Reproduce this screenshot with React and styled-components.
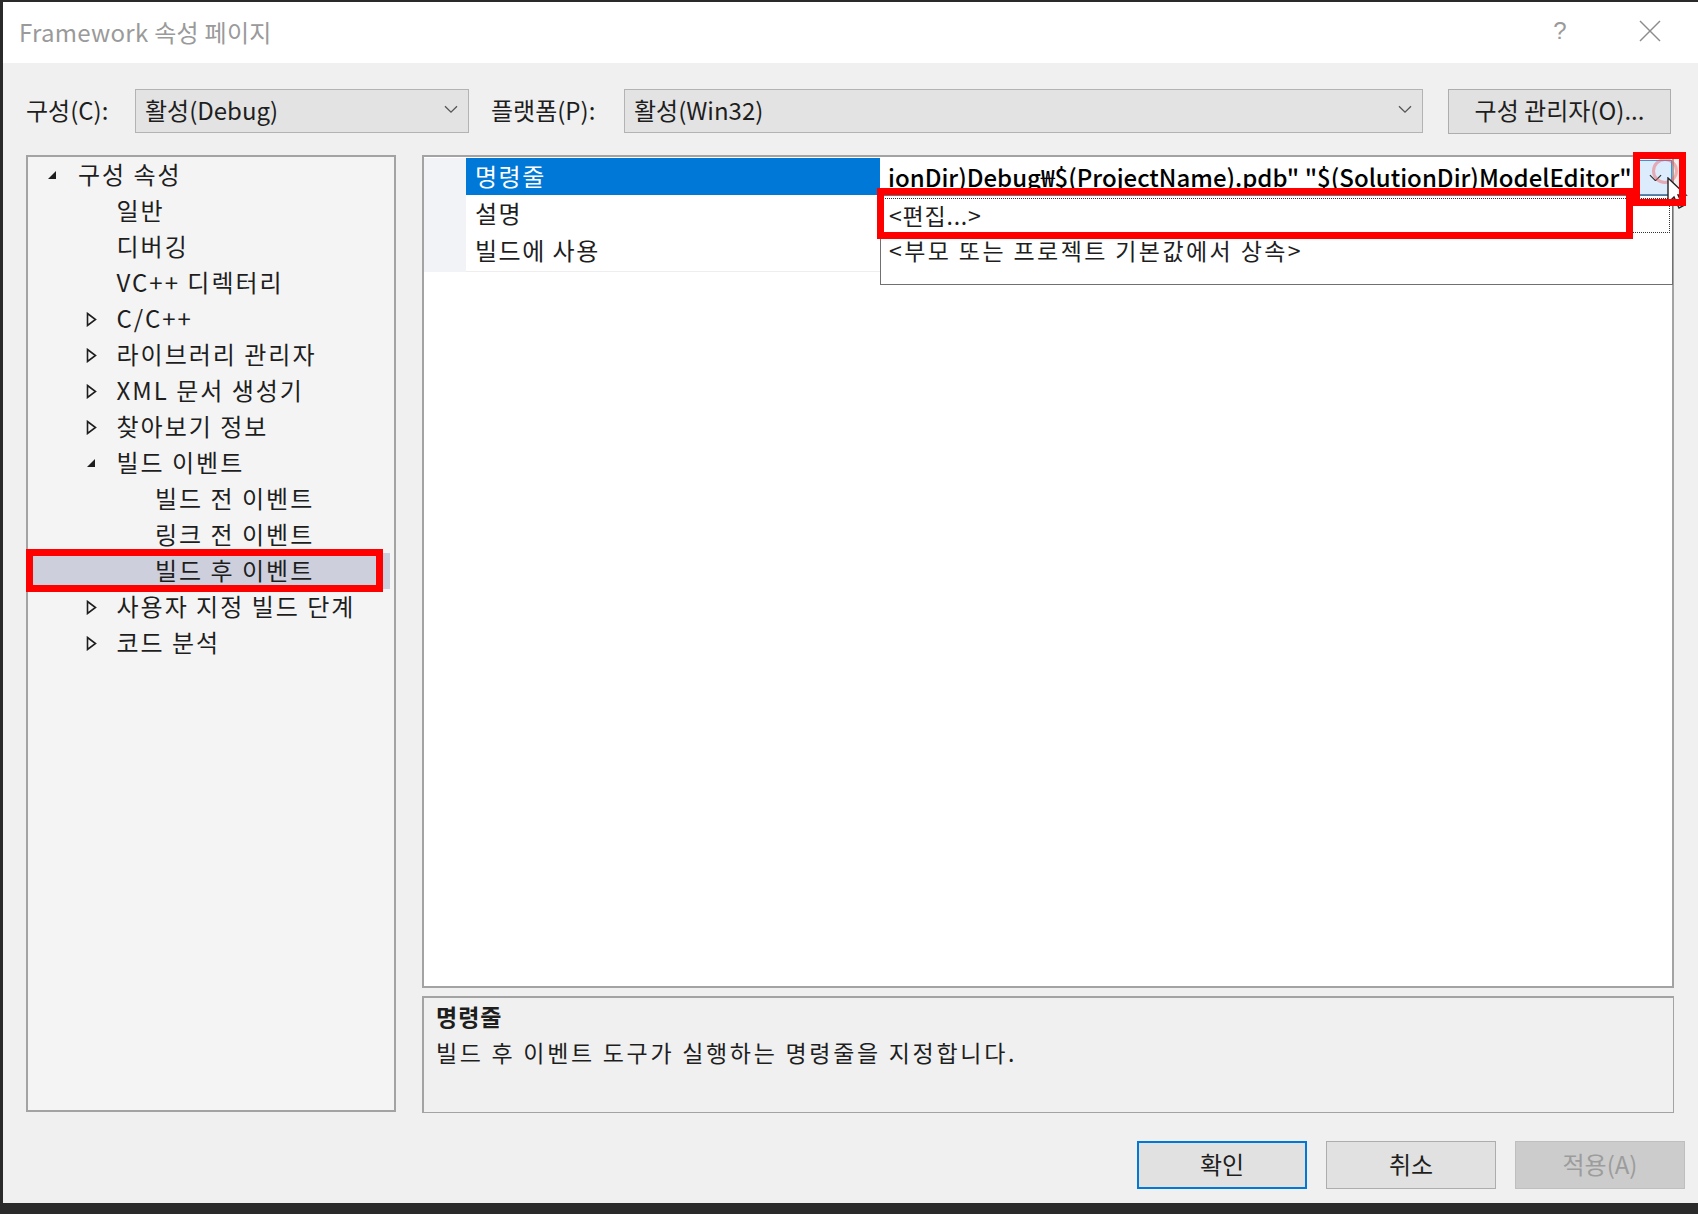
import styled, { createGlobalStyle } from "styled-components";

const GlobalStyle = createGlobalStyle`
  html, body {
    margin: 0;
    padding: 0;
    background: #2a2a2a;
  }
  body {
    font-family: "Noto Sans CJK KR", "Noto Sans", sans-serif;
  }
`;

const tree = [
  { label: "구성 속성", level: 0, twisty: "open" },
  { label: "일반", level: 1 },
  { label: "디버깅", level: 1 },
  { label: "VC++ 디렉터리", level: 1 },
  { label: "C/C++", level: 1, twisty: "closed" },
  { label: "라이브러리 관리자", level: 1, twisty: "closed" },
  { label: "XML 문서 생성기", level: 1, twisty: "closed" },
  { label: "찾아보기 정보", level: 1, twisty: "closed" },
  { label: "빌드 이벤트", level: 1, twisty: "open" },
  { label: "빌드 전 이벤트", level: 2 },
  { label: "링크 전 이벤트", level: 2 },
  { label: "빌드 후 이벤트", level: 2, selected: true },
  { label: "사용자 지정 빌드 단계", level: 1, twisty: "closed" },
  { label: "코드 분석", level: 1, twisty: "closed" },
];

function Chevron({ size = 14, color = "#555" }) {
  return (
    <svg width={size} height={size * 0.6} viewBox="0 0 14 8">
      <polyline points="1,1 7,7 13,1" fill="none" stroke={color} strokeWidth="1.3" />
    </svg>
  );
}

function Twisty({ kind }) {
  if (kind === "open") {
    return (
      <svg width="10" height="10" viewBox="0 0 10 10">
        <polygon points="9,1 9,9 1,9" fill="#1e1e1e" />
      </svg>
    );
  }
  if (kind === "closed") {
    return (
      <svg width="11" height="15" viewBox="0 0 11 15">
        <polygon points="1.5,1.5 9.5,7.5 1.5,13.5" fill="none" stroke="#1e1e1e" strokeWidth="1.6" />
      </svg>
    );
  }
  return null;
}

export default function App() {
  return (
    <>
      <GlobalStyle />
      <Screen>
        <Dialog>
          <TitleBar>
            <Title>Framework 속성 페이지</Title>
            <TitleButtons>
              <HelpMark>?</HelpMark>
              <svg width="22" height="22" viewBox="0 0 22 22">
                <line x1="1" y1="1" x2="21" y2="21" stroke="#8c8c8c" strokeWidth="1.4" />
                <line x1="21" y1="1" x2="1" y2="21" stroke="#8c8c8c" strokeWidth="1.4" />
              </svg>
            </TitleButtons>
          </TitleBar>

          <Toolbar>
            <Label $w={109}>구성(C):</Label>
            <Combo $w={334}>
              <span>활성(Debug)</span>
              <Chevron />
            </Combo>
            <Label $w={133} $ml={22}>플랫폼(P):</Label>
            <Combo $w={799}>
              <span>활성(Win32)</span>
              <Chevron />
            </Combo>
            <ToolButton>구성 관리자(O)...</ToolButton>
          </Toolbar>

          <Main>
            <Tree>
              {tree.map((item) => (
                <TreeRow key={item.label} $level={item.level} $selected={item.selected}>
                  <TwistyBox>
                    <Twisty kind={item.twisty} />
                  </TwistyBox>
                  <TreeLabel>{item.label}</TreeLabel>
                  {item.selected && <RedMark $top={-4} $left={-6} $w={357} $h={43} />}
                </TreeRow>
              ))}
            </Tree>

            <RightColumn>
              <Grid>
                <PropRow>
                  <Gutter />
                  <NameCell $selected>명령줄</NameCell>
                  <ValueCell>
                    <ValueText>ionDir)Debug₩$(ProjectName).pdb" "$(SolutionDir)ModelEditor"</ValueText>
                    <DropButton>
                      <Chevron size={13} color="#333" />
                    </DropButton>
                  </ValueCell>
                </PropRow>
                <PropRow>
                  <Gutter />
                  <NameCell>설명</NameCell>
                  <ValueCell />
                </PropRow>
                <PropRow>
                  <Gutter />
                  <NameCell>빌드에 사용</NameCell>
                  <ValueCell />
                </PropRow>

                <DropList>
                  <DropItem $focus $spacing={0.8}>&lt;편집...&gt;</DropItem>
                  <DropItem $spacing={2.4}>&lt;부모 또는 프로젝트 기본값에서 상속&gt;</DropItem>
                </DropList>
                <ClickRing />
                <Cursor width="22" height="34" viewBox="0 0 22 34">
                  <path d="M1,1 L1,26 L7,20 L12,31 L16,29 L11,18 L19,18 Z" fill="#fff" stroke="#222" strokeWidth="1.4" />
                </Cursor>
                <RedMark $top={31} $left={453} $w={756} $h={51} />
                <RedMark $top={-5} $left={1209} $w={53} $h={54} />
              </Grid>

              <Description>
                <DescTitle>명령줄</DescTitle>
                <DescText>빌드 후 이벤트 도구가 실행하는 명령줄을 지정합니다.</DescText>
              </Description>
            </RightColumn>
          </Main>

          <Footer>
            <DialogButton $primary>확인</DialogButton>
            <DialogButton>취소</DialogButton>
            <DialogButton $disabled>적용(A)</DialogButton>
          </Footer>
        </Dialog>
      </Screen>
    </>
  );
}

const Screen = styled.div`
  width: 1698px;
  height: 1214px;
  overflow: hidden;
  background: #2a2a2a;
  padding: 2px 0 0 3px;
  box-sizing: border-box;
`;

const Dialog = styled.div`
  width: 1695px;
  height: 1201px;
  background: #f0f0f0;
  display: flex;
  flex-direction: column;
  color: #1e1e1e;
  font-family: "Noto Sans CJK KR", "Noto Sans", sans-serif;
`;

const TitleBar = styled.div`
  height: 61px;
  flex-shrink: 0;
  background: #ffffff;
  display: flex;
  align-items: center;
  padding: 0 37px 3px 16px;
  box-sizing: border-box;
`;

const Title = styled.div`
  font-size: 24px;
  color: #9a9a9a;
  letter-spacing: 0.3px;
`;

const TitleButtons = styled.div`
  margin-left: auto;
  display: flex;
  align-items: center;
`;

const HelpMark = styled.span`
  width: 40px;
  text-align: center;
  margin-right: 59px;
  font-size: 24px;
  color: #9a9a9a;
  font-family: "Liberation Sans", sans-serif;
`;

const Toolbar = styled.div`
  display: flex;
  align-items: center;
  height: 44px;
  margin-top: 26px;
  padding-left: 23px;
  font-size: 24px;
  line-height: 1;
`;

const Label = styled.div`
  width: ${(p) => p.$w}px;
  margin-left: ${(p) => p.$ml || 0}px;
  padding-bottom: 3px;
  white-space: nowrap;
`;

const Combo = styled.div`
  width: ${(p) => p.$w}px;
  height: 44px;
  box-sizing: border-box;
  border: 1px solid #b3b3b3;
  background: #e3e3e3;
  display: flex;
  align-items: center;
  justify-content: space-between;
  padding: 0 10px 3px 9px;
`;

const ToolButton = styled.div`
  width: 223px;
  height: 45px;
  margin-left: 25px;
  box-sizing: border-box;
  border: 1px solid #adadad;
  background: #e1e1e1;
  display: flex;
  align-items: center;
  justify-content: center;
  padding-bottom: 3px;
`;

const Main = styled.div`
  display: flex;
  gap: 26px;
  margin-top: 22px;
  padding-left: 23px;
  height: 958px;
`;

const Tree = styled.div`
  width: 370px;
  height: 957px;
  box-sizing: border-box;
  border: 2px solid #a3a3a3;
  background: #f4f4f4;
  font-size: 24px;
`;

const TreeRow = styled.div`
  position: relative;
  height: 36px;
  box-sizing: border-box;
  display: flex;
  align-items: center;
  margin: 0 4px;
  padding-left: ${(p) => 12 + p.$level * 38.5}px;
  padding-bottom: 4px;
  background: ${(p) => (p.$selected ? "#cdd0dc" : "transparent")};
  white-space: nowrap;
`;

const TreeLabel = styled.span`
  letter-spacing: 2px;
`;

const TwistyBox = styled.div`
  width: 34px;
  display: flex;
  align-items: center;
  padding-left: 3px;
  padding-top: 4px;
  box-sizing: border-box;
`;

const RedMark = styled.div`
  position: absolute;
  top: ${(p) => p.$top}px;
  left: ${(p) => p.$left}px;
  width: ${(p) => p.$w}px;
  height: ${(p) => p.$h}px;
  box-sizing: border-box;
  border: 7px solid #ff0000;
  pointer-events: none;
`;

const RightColumn = styled.div`
  width: 1252px;
  display: flex;
  flex-direction: column;
  gap: 8px;
`;

const Grid = styled.div`
  position: relative;
  height: 833px;
  box-sizing: border-box;
  border: 2px solid #a3a3a3;
  background: #ffffff;
  padding-top: 1px;
  font-size: 24px;
`;

const PropRow = styled.div`
  display: grid;
  grid-template-columns: 42px 414px 1fr;
  height: 37px;
`;

const Gutter = styled.div`
  background: #f1f3f6;
`;

const NameCell = styled.div`
  display: flex;
  align-items: center;
  padding: 0 0 4px 9px;
  letter-spacing: 1.5px;
  background: ${(p) => (p.$selected ? "#0078d7" : "#ffffff")};
  color: ${(p) => (p.$selected ? "#ffffff" : "#1e1e1e")};
  border-bottom: 1px solid ${(p) => (p.$selected ? "#ffffff" : "#eeeeee")};
`;

const ValueCell = styled.div`
  display: flex;
  align-items: center;
  min-width: 0;
  padding-left: 8px;
  border-bottom: 1px solid #eeeeee;
`;

const ValueText = styled.div`
  flex: 1;
  min-width: 0;
  overflow: hidden;
  white-space: nowrap;
  color: #000000;
  font-weight: 500;
  padding-bottom: 3px;
`;

const DropButton = styled.div`
  width: 34px;
  height: 35px;
  box-sizing: border-box;
  border: 1px solid #3c8fd9;
  background: #dcecfc;
  display: flex;
  align-items: center;
  justify-content: center;
  flex-shrink: 0;
`;

const DropList = styled.div`
  position: absolute;
  left: 456px;
  top: 38px;
  width: 793px;
  height: 90px;
  box-sizing: border-box;
  border: 1px solid #707070;
  background: #ffffff;
  padding: 2px 2px 0 1px;
  font-size: 23px;
`;

const DropItem = styled.div`
  height: 35px;
  box-sizing: border-box;
  display: flex;
  align-items: center;
  padding: 0 0 2px 6px;
  letter-spacing: ${(p) => p.$spacing}px;
  border: 1px dotted ${(p) => (p.$focus ? "#333333" : "transparent")};
  white-space: nowrap;
`;

const ClickRing = styled.div`
  position: absolute;
  left: 1228px;
  top: 1px;
  width: 26px;
  height: 26px;
  border-radius: 50%;
  border: 3px solid rgba(240, 90, 90, 0.45);
  box-sizing: border-box;
`;

const Cursor = styled.svg`
  position: absolute;
  left: 1243px;
  top: 20px;
`;

const Description = styled.div`
  height: 117px;
  box-sizing: border-box;
  border: 1px solid #a3a3a3;
  border-top-width: 2px;
  border-left-width: 2px;
  background: #f0f0f0;
  padding: 0 12px;
  font-size: 23px;
  line-height: 36px;
`;

const DescTitle = styled.div`
  font-weight: 700;
  letter-spacing: 1px;
`;

const DescText = styled.div`
  letter-spacing: 2.7px;
`;

const Footer = styled.div`
  display: flex;
  justify-content: flex-end;
  gap: 19px;
  margin-top: 28px;
  padding-right: 13px;
`;

const DialogButton = styled.div`
  width: 170px;
  height: 48px;
  box-sizing: border-box;
  display: flex;
  align-items: center;
  justify-content: center;
  padding-bottom: 3px;
  font-size: 24px;
  background: ${(p) => (p.$disabled ? "#cccccc" : "#e1e1e1")};
  color: ${(p) => (p.$disabled ? "#9c9c9c" : "#1e1e1e")};
  border: ${(p) =>
    p.$primary ? "2px solid #0078d7" : p.$disabled ? "1px solid #bfbfbf" : "1px solid #adadad"};
`;
